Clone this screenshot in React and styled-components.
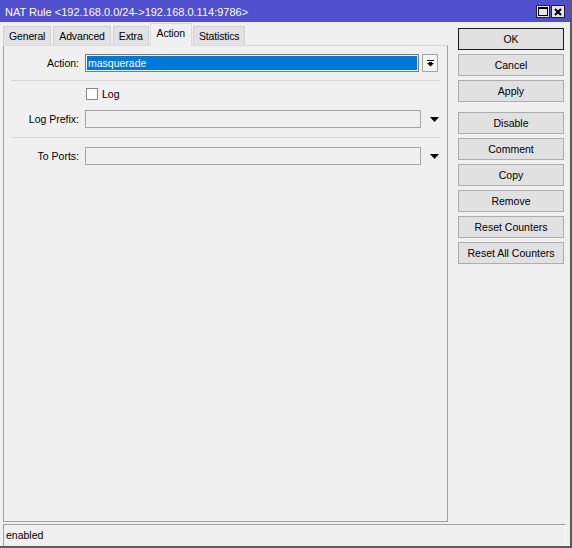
import styled, { createGlobalStyle } from "styled-components";

const GlobalStyle = createGlobalStyle`
  html, body {
    margin: 0;
    padding: 0;
    background: #f0f0f0;
  }
  * {
    box-sizing: border-box;
  }
`;

const Window = styled.div`
  width: 572px;
  height: 548px;
  display: flex;
  flex-direction: column;
  background: #f0f0f0;
  border-right: 2px solid #5a5a5a;
  border-bottom: 2px solid #5a5a5a;
  font-family: "Liberation Sans", Arial, sans-serif;
  font-size: 10.5px;
  color: #000;
  overflow: hidden;
`;

const TitleBar = styled.div`
  height: 22px;
  flex: none;
  display: flex;
  align-items: center;
  justify-content: space-between;
  padding: 1px 5px 0 5px;
  background: #5050cf;
  color: #fff;
  font-size: 11px;
`;

const TitleButtons = styled.div`
  display: flex;
  gap: 1px;
`;

const TitleButton = styled.div`
  width: 14px;
  height: 13px;
  display: flex;
  align-items: center;
  justify-content: center;
  background: #e4e4e4;
  border: 1px solid #222;
`;

const Body = styled.div`
  flex: 1;
  display: flex;
  min-height: 0;
`;

const Main = styled.div`
  width: 445px;
  margin-left: 3px;
  display: flex;
  flex-direction: column;
  padding-top: 2px;
`;

const Tabs = styled.div`
  height: 22px;
  display: flex;
  align-items: flex-end;
  gap: 2px;
  position: relative;
  z-index: 1;
  margin-bottom: -1px;
`;

const Tab = styled.div`
  height: ${p => (p.$active ? "23px" : "20px")};
  padding: 0 ${p => (p.$active ? "6px" : "5px")};
  padding-bottom: ${p => (p.$active ? "4px" : "0")};
  display: flex;
  align-items: center;
  letter-spacing: -0.15px;
  background: ${p => (p.$active ? "#f0f0f0" : "#e2e2e2")};
  border: 1px solid ${p => (p.$active ? "#dadada" : "#d2d2d2")};
  border-bottom: ${p => (p.$active ? "none" : "1px solid #d9d9d9")};
  margin: ${p => (p.$active ? "0 -1px" : "0")};
`;

const Panel = styled.div`
  flex: 1;
  display: flex;
  flex-direction: column;
  border: 1px solid #a0a0a0;
  border-top: 1px solid #d9d9d9;
  padding: 8px 0 0 0;
`;

const Row = styled.div`
  height: 18px;
  display: flex;
  align-items: center;
  margin-top: ${p => p.$mt || 0}px;
`;

const Label = styled.div`
  width: 76px;
  text-align: right;
  padding-right: 1px;
`;

const Field = styled.div`
  margin-left: 5px;
  width: ${p => p.$w}px;
  height: 18px;
  border: 1px solid ${p => (p.$selected ? "#7a7a7a" : "#a4a4a4")};
  background: #f0f0f0;
  display: flex;
  align-items: center;
`;

const SelectedValue = styled.div`
  margin: 1px;
  flex: 1;
  height: 14px;
  background: #0078d7;
  color: #fff;
  padding-left: 1px;
  line-height: 14px;
`;

const DropButton = styled.div`
  margin-left: 3px;
  width: 16px;
  height: 18px;
  border: 1px solid #a4a4a4;
  background: #f4f4f4;
  display: flex;
  align-items: center;
  justify-content: center;
`;

const Arrow = styled.div`
  margin-left: 7px;
  width: 12px;
  display: flex;
  justify-content: center;
`;

const Separator = styled.div`
  height: 1px;
  margin: ${p => p.$top}px 7px ${p => p.$bottom}px 7px;
  background: #d8d8d8;
`;

const CheckRow = styled.label`
  display: flex;
  align-items: center;
  margin-left: 82px;
  gap: 4px;
  height: 14px;
`;

const Check = styled.span`
  width: 12px;
  height: 12px;
  border: 1px solid #8a8a8a;
  background: #fff;
`;

const Side = styled.div`
  width: 106px;
  margin-left: 10px;
  padding-top: 6px;
  display: flex;
  flex-direction: column;
  gap: 4px;
`;

const Button = styled.div`
  height: 22px;
  display: flex;
  align-items: center;
  justify-content: center;
  background: #e1e1e1;
  border: 1px solid ${p => (p.$default ? "#1a1a1a" : "#adadad")};
  margin-top: ${p => (p.$spaced ? "6px" : "0")};
`;

const StatusBar = styled.div`
  height: 22px;
  flex: none;
  margin: 2px 4px 0 3px;
  border-top: 1px solid #a0a0a0;
  border-left: 1px solid #a0a0a0;
  border-right: 1px solid #fafafa;
  display: flex;
  align-items: center;
  padding: 0 0 1px 2px;
`;

const DownTriangle = () => (
  <svg width="9" height="5" viewBox="0 0 9 5">
    <polygon points="0,0 9,0 4.5,5" fill="#000" />
  </svg>
);

const DropIcon = () => (
  <svg width="7" height="7" viewBox="0 0 7 7">
    <rect x="0" y="0" width="7" height="1" fill="#000" />
    <rect x="2" y="2" width="3" height="1" fill="#000" />
    <polygon points="0,3 7,3 3.5,6.5" fill="#000" />
  </svg>
);

const MaxIcon = () => (
  <svg width="10" height="9" viewBox="0 0 10 9">
    <rect x="0.5" y="0.5" width="9" height="8" fill="none" stroke="#000" />
    <rect x="0" y="0" width="10" height="2" fill="#000" />
  </svg>
);

const CloseIcon = () => (
  <svg width="8" height="8" viewBox="0 0 8 8">
    <path d="M1 1 L7 7 M7 1 L1 7" stroke="#000" strokeWidth="2" />
  </svg>
);

const tabs = ["General", "Advanced", "Extra", "Action", "Statistics"];
const buttons = [
  { label: "OK", isDefault: true },
  { label: "Cancel" },
  { label: "Apply" },
  { label: "Disable", spaced: true },
  { label: "Comment" },
  { label: "Copy" },
  { label: "Remove" },
  { label: "Reset Counters" },
  { label: "Reset All Counters" },
];

export default function App() {
  return (
    <>
      <GlobalStyle />
      <Window>
        <TitleBar>
          <span>NAT Rule &lt;192.168.0.0/24-&gt;192.168.0.114:9786&gt;</span>
          <TitleButtons>
            <TitleButton>
              <MaxIcon />
            </TitleButton>
            <TitleButton>
              <CloseIcon />
            </TitleButton>
          </TitleButtons>
        </TitleBar>
        <Body>
          <Main>
            <Tabs>
              {tabs.map(t => (
                <Tab key={t} $active={t === "Action"}>
                  {t}
                </Tab>
              ))}
            </Tabs>
            <Panel>
              <Row>
                <Label>Action:</Label>
                <Field $w={334} $selected>
                  <SelectedValue>masquerade</SelectedValue>
                </Field>
                <DropButton>
                  <DropIcon />
                </DropButton>
              </Row>
              <Separator $top={8} $bottom={6} />
              <CheckRow>
                <Check />
                Log
              </CheckRow>
              <Row $mt={9}>
                <Label>Log Prefix:</Label>
                <Field $w={336} />
                <Arrow>
                  <DownTriangle />
                </Arrow>
              </Row>
              <Separator $top={9} $bottom={9} />
              <Row>
                <Label>To Ports:</Label>
                <Field $w={336} />
                <Arrow>
                  <DownTriangle />
                </Arrow>
              </Row>
            </Panel>
          </Main>
          <Side>
            {buttons.map(b => (
              <Button key={b.label} $default={b.isDefault} $spaced={b.spaced}>
                {b.label}
              </Button>
            ))}
          </Side>
        </Body>
        <StatusBar>enabled</StatusBar>
      </Window>
    </>
  );
}
